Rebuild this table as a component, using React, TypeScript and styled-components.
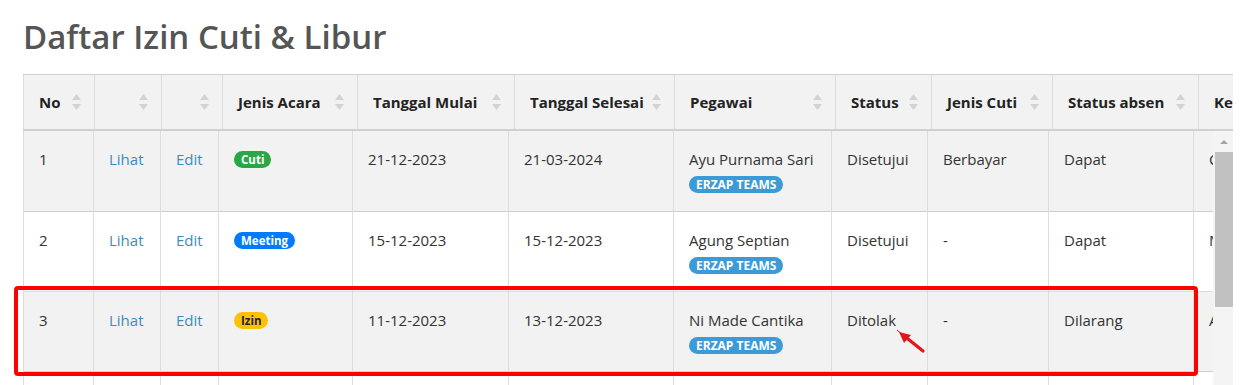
import styled, { createGlobalStyle } from 'styled-components'

const GlobalStyle = createGlobalStyle`
  html, body {
    margin: 0;
    padding: 0;
    background: #ffffff;
    overflow: hidden;
    font-family: 'Open Sans', 'Liberation Sans', sans-serif;
    color: #333333;
  }
`

type Badge = { label: string; tone: 'green' | 'blue' | 'yellow' }

type Row = {
  no: number
  acara: Badge
  mulai: string
  selesai: string
  pegawai: string
  status: string
  jenisCuti: string
  absen: string
  ket: string
}

const headCols = [71, 67, 61, 135, 157, 160, 161, 96, 121, 146, 220]
const bodyCols = [70, 67, 58, 134, 156, 165, 158, 96, 121, 145, 220]
const headers = [
  'No',
  '',
  '',
  'Jenis Acara',
  'Tanggal Mulai',
  'Tanggal Selesai',
  'Pegawai',
  'Status',
  'Jenis Cuti',
  'Status absen',
  'Keterangan',
]

const rows: Row[] = [
  {
    no: 1,
    acara: { label: 'Cuti', tone: 'green' },
    mulai: '21-12-2023',
    selesai: '21-03-2024',
    pegawai: 'Ayu Purnama Sari',
    status: 'Disetujui',
    jenisCuti: 'Berbayar',
    absen: 'Dapat',
    ket: 'Cuti melahirkan',
  },
  {
    no: 2,
    acara: { label: 'Meeting', tone: 'blue' },
    mulai: '15-12-2023',
    selesai: '15-12-2023',
    pegawai: 'Agung Septian',
    status: 'Disetujui',
    jenisCuti: '-',
    absen: 'Dapat',
    ket: 'Meeting klien',
  },
  {
    no: 3,
    acara: { label: 'Izin', tone: 'yellow' },
    mulai: '11-12-2023',
    selesai: '13-12-2023',
    pegawai: 'Ni Made Cantika',
    status: 'Ditolak',
    jenisCuti: '-',
    absen: 'Dilarang',
    ket: 'Acara keluarga',
  },
  {
    no: 4,
    acara: { label: 'Cuti', tone: 'green' },
    mulai: '04-12-2023',
    selesai: '05-12-2023',
    pegawai: 'Budi Santoso',
    status: 'Disetujui',
    jenisCuti: 'Berbayar',
    absen: 'Dapat',
    ket: 'Cuti tahunan',
  },
]

const SortIcon = () => (
  <SortWrap width="9" height="16" viewBox="0 0 9 16">
    <polygon points="4.5,0 9,6 0,6" fill="#d3d3d3" />
    <polygon points="0,10 9,10 4.5,16" fill="#d3d3d3" />
  </SortWrap>
)

function App() {
  return (
    <Page>
      <GlobalStyle />
      <Title>Daftar Izin Cuti &amp; Libur</Title>

      <TableBox>
        <HeadScroll>
          <Table $width={headCols.reduce((a, b) => a + b, 0)}>
            <colgroup>
              {headCols.map((w, i) => (
                <col key={i} style={{ width: w }} />
              ))}
            </colgroup>
            <thead>
              <tr>
                {headers.map((h, i) => (
                  <HeadCell key={i}>
                    {h}
                    <SortIcon />
                  </HeadCell>
                ))}
              </tr>
            </thead>
          </Table>
        </HeadScroll>

        <BodyArea>
          <BodyClip>
            <Table $width={bodyCols.reduce((a, b) => a + b, 0)}>
              <colgroup>
                {bodyCols.map((w, i) => (
                  <col key={i} style={{ width: w }} />
                ))}
              </colgroup>
              <tbody>
                {rows.map((r) => (
                  <BodyRow key={r.no} $striped={r.no % 2 === 1}>
                    <Cell>{r.no}</Cell>
                    <Cell>
                      <Link>Lihat</Link>
                    </Cell>
                    <Cell>
                      <Link>Edit</Link>
                    </Cell>
                    <Cell>
                      <Pill $tone={r.acara.tone}>{r.acara.label}</Pill>
                    </Cell>
                    <Cell>{r.mulai}</Cell>
                    <Cell>{r.selesai}</Cell>
                    <Cell>
                      <Name>{r.pegawai}</Name>
                      <TeamBadge>ERZAP TEAMS</TeamBadge>
                    </Cell>
                    <Cell>{r.status}</Cell>
                    <Cell>{r.jenisCuti}</Cell>
                    <Cell>{r.absen}</Cell>
                    <Cell>{r.ket}</Cell>
                  </BodyRow>
                ))}
              </tbody>
            </Table>
          </BodyClip>
          <ScrollTrack>
            <ScrollArrow />
            <ScrollThumb />
          </ScrollTrack>
        </BodyArea>
      </TableBox>

      <Highlight />
      <Pointer width="34" height="30" viewBox="0 0 34 30">
        <line x1="29" y1="25" x2="14" y2="13" stroke="#e8141b" strokeWidth="3.2" strokeLinecap="round" />
        <polygon points="5,6 17,9 10,17" fill="#e8141b" />
        <line x1="3" y1="4" x2="8" y2="8" stroke="#e8141b" strokeWidth="1" />
      </Pointer>
    </Page>
  )
}

const Page = styled.div`
  position: relative;
  padding: 15px 17px 0 23px;
`

const Title = styled.h1`
  margin: 0 0 15px;
  font-family: 'Open Sans', 'Liberation Sans', sans-serif;
  font-size: 33px;
  font-weight: 600;
  line-height: 44px;
  color: #555555;
`

const TableBox = styled.div`
  width: 1210px;
`

const HeadScroll = styled.div`
  overflow: hidden;
  border-top: 1px solid #cfcfcf;
  background: #f2f2f2;
`

const Table = styled.table<{ $width: number }>`
  border-collapse: collapse;
  table-layout: fixed;
  width: ${(p) => p.$width}px;
`

const HeadCell = styled.th`
  position: relative;
  height: 54px;
  padding: 0 28px 0 15px;
  text-align: left;
  vertical-align: middle;
  font-size: 15px;
  font-weight: 700;
  color: #222222;
  white-space: nowrap;
  overflow: hidden;
  background: #f2f2f2;
  border-left: 1px solid #dcdcdc;
  border-bottom: 2px solid #d0d0d0;
`

const SortWrap = styled.svg`
  position: absolute;
  right: 13px;
  top: 50%;
  margin-top: -8px;
`

const BodyArea = styled.div`
  display: flex;
  height: 260px;
`

const BodyClip = styled.div`
  width: 1190px;
  overflow: hidden;
`

const BodyRow = styled.tr<{ $striped: boolean }>`
  background: ${(p) => (p.$striped ? '#f2f2f2' : '#ffffff')};
  border-bottom: 1px solid ${(p) => (p.$striped ? '#cfcfcf' : '#dddddd')};
`

const Cell = styled.td`
  height: 80px;
  box-sizing: border-box;
  padding: 18px 15px 0;
  vertical-align: top;
  font-size: 15px;
  line-height: 21px;
  color: #333333;
  white-space: nowrap;
  overflow: hidden;
  border-left: 1px solid #dddddd;
`

const Link = styled.a`
  color: #3c8dbc;
  text-decoration: none;
  cursor: pointer;
`

const toneColors = {
  green: { bg: '#28a745', fg: '#ffffff' },
  blue: { bg: '#007bff', fg: '#ffffff' },
  yellow: { bg: '#ffc107', fg: '#212529' },
}

const Pill = styled.span<{ $tone: Badge['tone'] }>`
  display: inline-block;
  vertical-align: top;
  margin-top: 2px;
  padding: 0 7px;
  height: 17px;
  line-height: 17px;
  border-radius: 9px;
  font-size: 11.5px;
  font-weight: 700;
  background: ${(p) => toneColors[p.$tone].bg};
  color: ${(p) => toneColors[p.$tone].fg};
`

const Name = styled.div`
  line-height: 21px;
`

const TeamBadge = styled.span`
  display: inline-block;
  margin-top: 6px;
  padding: 0 7px;
  height: 17px;
  line-height: 17px;
  border-radius: 9px;
  font-size: 12px;
  font-weight: 700;
  background: #3c9ad6;
  color: #ffffff;
`

const ScrollTrack = styled.div`
  width: 20px;
  display: flex;
  flex-direction: column;
  align-items: flex-end;
  background: #f4f4f4;
`

const ScrollArrow = styled.div`
  width: 18px;
  height: 21px;
  display: flex;
  justify-content: center;
  align-items: center;
  &::before {
    content: '';
    border-left: 4.5px solid transparent;
    border-right: 4.5px solid transparent;
    border-bottom: 4px solid #a3a3a3;
  }
`

const ScrollThumb = styled.div`
  width: 18px;
  height: 155px;
  background: #c1c1c1;
`

const Highlight = styled.div`
  position: absolute;
  left: 14px;
  top: 286px;
  width: 1184px;
  height: 90px;
  box-sizing: border-box;
  border: 4px solid #ff0000;
  border-radius: 4px;
  pointer-events: none;
`

const Pointer = styled.svg`
  position: absolute;
  left: 894px;
  top: 326px;
`

export default App
